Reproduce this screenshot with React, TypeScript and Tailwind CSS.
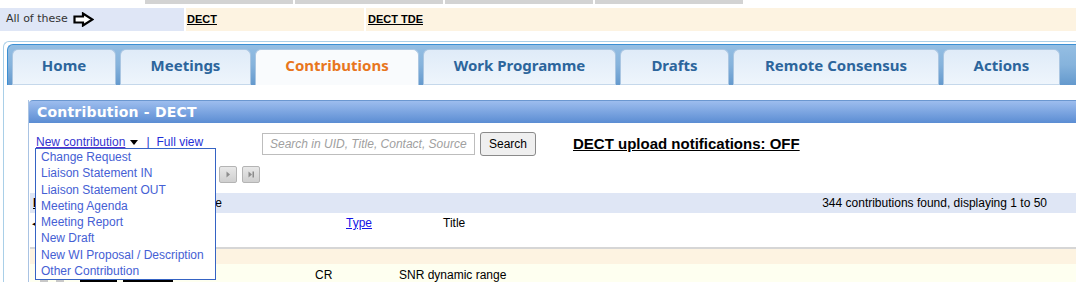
import React from "react";

const tabs = [
  { label: "Home", w: "w-[104px]", active: false },
  { label: "Meetings", w: "w-[131px]", active: false },
  { label: "Contributions", w: "w-[164px]", active: true },
  { label: "Work Programme", w: "w-[193px]", active: false },
  { label: "Drafts", w: "w-[109px]", active: false },
  { label: "Remote Consensus", w: "w-[206px]", active: false },
  { label: "Actions", w: "w-[117px]", active: false },
];

const menuItems = [
  "Change Request",
  "Liaison Statement IN",
  "Liaison Statement OUT",
  "Meeting Agenda",
  "Meeting Report",
  "New Draft",
  "New WI Proposal / Description",
  "Other Contribution",
];

const PageButton = ({ kind }: { kind: "first" | "prev" | "next" | "last" }) => (
  <div className="w-[18px] h-[17px] flex items-center justify-center rounded-[2px] border border-[#b4b4b4] bg-linear-to-b from-[#e8e8e8] to-[#cfcfcf]">
    <svg width="10" height="9" viewBox="0 0 10 9">
      {kind === "next" && <path d="M3.5 1.5 L7 4.5 L3.5 7.5 Z" fill="#8c8c8c" />}
      {kind === "prev" && <path d="M6.5 1.5 L3 4.5 L6.5 7.5 Z" fill="#8c8c8c" />}
      {kind === "last" && (
        <>
          <path d="M2.5 1.5 L6 4.5 L2.5 7.5 Z" fill="#8c8c8c" />
          <rect x="6.5" y="1.5" width="1.5" height="6" fill="#8c8c8c" />
        </>
      )}
      {kind === "first" && (
        <>
          <path d="M7.5 1.5 L4 4.5 L7.5 7.5 Z" fill="#8c8c8c" />
          <rect x="2" y="1.5" width="1.5" height="6" fill="#8c8c8c" />
        </>
      )}
    </svg>
  </div>
);

export default function App() {
  return (
    <div className="w-[1076px] h-[282px] overflow-hidden bg-white font-['Liberation_Sans',Arial,sans-serif] text-black">
      {/* remnants of the upper strip */}
      <div className="flex h-[4px] pl-[145px] gap-[2px]">
        <div className="w-[148px] bg-[#d3d3d3]" />
        <div className="w-[148px] bg-[#d3d3d3]" />
        <div className="w-[148px] bg-[#d3d3d3]" />
        <div className="w-[148px] bg-[#d3d3d3]" />
      </div>

      {/* committee selector */}
      <div className="mt-[4px] flex h-[23px] gap-[2px]">
        <div className="w-[184px] bg-[#dfe6f6] flex items-center pl-[6px] gap-[5px] font-['DejaVu_Sans',Verdana,sans-serif] text-[11px] text-[#333]">
          <span>All of these</span>
          <svg width="21" height="15" viewBox="0 0 21 15">
            <path d="M1.5 4.5 H10 V1.5 L19.5 7.5 L10 13.5 V10.5 H1.5 Z" fill="white" stroke="black" strokeWidth="2.2" strokeLinejoin="miter" />
          </svg>
        </div>
        <div className="w-[178px] bg-[#fdf3e1] flex items-center pl-[1px] text-[11px] font-bold underline">
          DECT
        </div>
        <div className="flex-1 bg-[#fdf3e1] flex items-center pl-[2px] text-[11px] font-bold underline">
          DECT TDE
        </div>
      </div>

      {/* main frame */}
      <div className="mt-[10px] ml-[3px] border-l border-t border-[#a9cfe8] rounded-tl-[6px] pt-[2px] pl-[3px]">
        {/* tab bar */}
        <div className="h-[41px] border-t border-l border-[#3b8fd3] rounded-tl-[6px] bg-linear-to-b from-[#94bee3] via-[#86b3dc] to-[#6499cd] pt-[4px] pl-[4px] flex gap-[4px]">
          {tabs.map((t) => (
            <div
              key={t.label}
              className={
                t.active
                  ? `${t.w} h-[36px] flex items-center justify-center pb-[4px] rounded-t-[6px] border border-b-0 border-[#aac6e2] bg-[#f9fbfd] text-[#e8761e] text-[15px] font-bold font-['Noto_Sans',sans-serif]`
                  : `${t.w} h-[36px] flex items-center justify-center pb-[4px] rounded-t-[6px] border border-[#aac6e2] border-b-[#c5d8eb] bg-linear-to-b from-[#dfebf8] to-[#eef5fc] text-[#2c659c] text-[15px] font-bold font-['Noto_Sans',sans-serif]`
              }
            >
              {t.label}
            </div>
          ))}
        </div>

        {/* contribution panel */}
        <div className="mt-[15px] ml-[21px] border-l border-[#a9c3e3]">
          <div className="h-[23px] border-t border-[#6b97d0] rounded-tl-[4px] bg-linear-to-b from-[#9dbdee] to-[#5b8dd3] pl-[8px] flex items-center text-white text-[14px] font-bold tracking-[0.2px] font-['DejaVu_Sans',Verdana,sans-serif]">
            Contribution - DECT
          </div>

          <div className="relative pt-[8px]">
            {/* toolbar */}
            <div className="h-[26px] flex items-center pl-[7px] text-[12px]">
              <div className="w-[226px] flex items-center mb-[4px]">
                <span className="text-[#3434d0] underline decoration-[#5a2fd0]">New contribution</span>
                <svg className="ml-[5px]" width="8" height="5" viewBox="0 0 8 5">
                  <path d="M0 0 H8 L4 5 Z" fill="black" />
                </svg>
                <span className="ml-[8px] text-[#2030d0]">|</span>
                <span className="ml-[7px] text-[#1f2fd8]">Full view</span>
              </div>
              <div className="w-[213px] h-[22px] border border-[#bdbdbd] pl-[7px] flex items-center italic text-[#a0a0a0]">
                Search in UID, Title, Contact, Source
              </div>
              <div className="ml-[5px] w-[56px] h-[24px] rounded-[3px] border border-[#8a8a8a] bg-[#efefef] flex items-center justify-center">
                Search
              </div>
              <span className="ml-[37px] text-[15px] font-bold underline">DECT upload notifications: OFF</span>
            </div>

            {/* pager */}
            <div className="mt-[9px] h-[17px] pl-[144px] flex gap-[5px]">
              <PageButton kind="first" />
              <PageButton kind="prev" />
              <PageButton kind="next" />
              <PageButton kind="last" />
            </div>

            {/* results table */}
            <div className="mt-[10px] ml-[1px] text-[12px]">
              <div className="h-[20px] bg-[#dfe6f5] flex items-center">
                <div className="w-[192px] pl-[3px] flex justify-between">
                  <span className="font-bold underline">D</span>
                  <span>Page</span>
                </div>
                <div className="flex-1 text-right pr-[29px]">344 contributions found, displaying 1 to 50</div>
              </div>
              <div className="h-[34px] flex items-start pt-[3px] leading-[14px]">
                <div className="w-[316px] pl-[2px] text-[11px]">◀</div>
                <div className="w-[97px] text-[#1414e6] underline">Type</div>
                <div>Title</div>
              </div>
              <div className="h-[2px] bg-[#d6d6d6]" />
              <div className="h-[15px] bg-[#fdf3e1]" />
              <div className="h-[30px] bg-[#fefff0] flex items-start leading-[14px]">
                <div className="w-[285px] pl-[10px] pt-[15px] flex">
                  <div className="w-[8px] h-[8px] bg-[#c8c8c8]" />
                  <div className="ml-[8px] w-[8px] h-[8px] bg-[#c8c8c8]" />
                  <div className="ml-[16px] w-[37px] h-[10px] bg-black" />
                  <div className="ml-[6px] w-[50px] h-[10px] bg-black" />
                </div>
                <div className="w-[84px] pt-[4px]">CR</div>
                <div className="pt-[4px]">SNR dynamic range</div>
              </div>
            </div>

            {/* open "New contribution" menu */}
            <div className="absolute left-[6px] top-[25px] w-[181px] h-[132px] overflow-hidden border border-[#3563c4] bg-white pl-[5px] text-[12px] leading-[16.25px] text-[#4560d4]">
              {menuItems.map((m) => (
                <div key={m}>{m}</div>
              ))}
            </div>
          </div>
        </div>
      </div>
    </div>
  );
}
